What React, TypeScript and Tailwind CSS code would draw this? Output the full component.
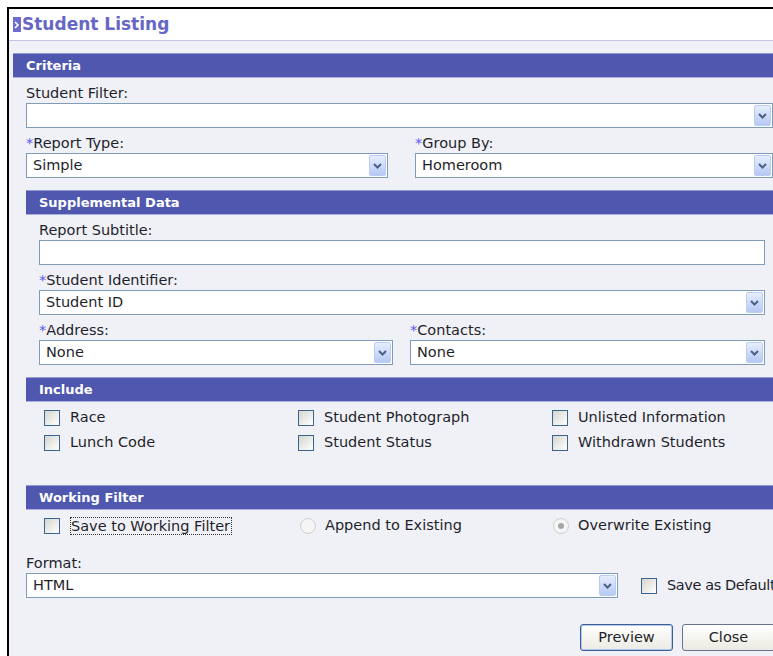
import React from 'react';

type FieldProps = {
  label: string;
  required?: boolean;
  children: React.ReactNode;
};

const SectionBar = ({ title }: { title: string }) => (
  <div className="h-[25px] bg-[#4f58ae] border-t border-b border-t-[#9299d3] border-b-[#aab0e0] flex items-center pl-[13px] text-white font-bold text-[13px]">
    {title}
  </div>
);

const Label = ({ text, required }: { text: string; required?: boolean }) => (
  <div className="h-[18px] leading-[18px] whitespace-nowrap">
    {required && <span className="text-[#5a5af2]">*</span>}
    {text}
  </div>
);

const Field = ({ label, required, children }: FieldProps) => (
  <div>
    <Label text={label} required={required} />
    <div className="mt-[1px]">{children}</div>
  </div>
);

// XP style combo arrow
const DropArrow = () => (
  <div className="w-[17px] shrink-0 self-stretch my-[1px] mr-[1px] rounded-[2px] border border-[#bccdf3] bg-linear-to-b from-[#e6eefe] to-[#b6c9f5] flex items-center justify-center">
    <svg width="9" height="6" viewBox="0 0 9 6">
      <polyline points="1,1 4.5,4.5 8,1" fill="none" stroke="#4d6185" strokeWidth="2" />
    </svg>
  </div>
);

const Select = ({ value, width }: { value: string; width: string }) => (
  <div className={`${width} h-[25px] bg-white border border-[#7f9db9] flex items-center`}>
    <span className="flex-1 pl-[6px] whitespace-nowrap">{value}</span>
    <DropArrow />
  </div>
);

const TextBox = ({ width }: { width: string }) => (
  <div className={`${width} h-[25px] bg-white border border-[#7f9db9]`} />
);

const CheckBox = () => (
  <span className="w-[16px] h-[16px] shrink-0 border border-[#3b6591] bg-linear-to-br from-[#d6d6cf] to-white" />
);

const Radio = ({ checked }: { checked?: boolean }) => (
  <span className="w-[16px] h-[16px] shrink-0 rounded-full border border-[#cfcfcf] bg-[#f5f5f5] flex items-center justify-center">
    {checked && <span className="w-[6px] h-[6px] rounded-full bg-[#a6a6a6]" />}
  </span>
);

const Check = ({ label }: { label: string }) => (
  <div className="h-[25px] flex items-center gap-[10px] whitespace-nowrap">
    <CheckBox />
    <span>{label}</span>
  </div>
);

const Button = ({ label, primary }: { label: string; primary?: boolean }) => (
  <button
    className={`w-[93px] h-[27px] rounded-[3px] border bg-linear-to-b from-white to-[#ebeae2] text-[14.5px] text-[#1f1f2b] ${
      primary ? 'border-[#3d5f96] shadow-[inset_0_0_0_1px_#b4c8ee]' : 'border-[#66738a]'
    }`}
  >
    {label}
  </button>
);

export default function App() {
  return (
    <div className="w-[773px] h-[656px] overflow-hidden bg-white font-['DejaVu_Sans',sans-serif] text-[14.5px] text-[#1f1f2b]">
      <div className="ml-[7px] mt-[7px] w-[820px] h-[700px] border-l-2 border-t-2 border-black bg-[#f0f1f7]">
        {/* Title */}
        <div className="h-[32px] bg-white border-b border-[#c3c5e6] flex items-center pl-[4px]">
          <span className="w-[8px] h-[15px] bg-[#6c6cd0] flex items-center justify-center">
            <svg width="6" height="8" viewBox="0 0 6 8">
              <polyline points="1,1 4,4 1,7" fill="none" stroke="white" strokeWidth="1.6" />
            </svg>
          </span>
          <span className="ml-[1px] text-[17px] font-bold text-[#6666c6] leading-none">Student Listing</span>
        </div>

        <div className="pl-[4px] pt-[12px]">
          <div className="w-[790px]">
            <SectionBar title="Criteria" />
            <div className="pl-[13px] pt-[6px]">
              <Field label="Student Filter:">
                <Select value="" width="w-[747px]" />
              </Field>

              <div className="mt-[6px] flex gap-[27px]">
                <Field label="Report Type:" required>
                  <Select value="Simple" width="w-[362px]" />
                </Field>
                <Field label="Group By:" required>
                  <Select value="Homeroom" width="w-[358px]" />
                </Field>
              </div>

              {/* Supplemental data */}
              <div className="mt-[12px] w-[760px]">
                <SectionBar title="Supplemental Data" />
                <div className="pl-[13px] pt-[6px]">
                  <Field label="Report Subtitle:">
                    <TextBox width="w-[726px]" />
                  </Field>
                  <div className="mt-[6px]">
                    <Field label="Student Identifier:" required>
                      <Select value="Student ID" width="w-[726px]" />
                    </Field>
                  </div>
                  <div className="mt-[6px] flex gap-[17px]">
                    <Field label="Address:" required>
                      <Select value="None" width="w-[354px]" />
                    </Field>
                    <Field label="Contacts:" required>
                      <Select value="None" width="w-[355px]" />
                    </Field>
                  </div>
                </div>
              </div>

              {/* Include */}
              <div className="mt-[12px] w-[760px]">
                <SectionBar title="Include" />
                <div className="pt-[3px] pl-[18px] grid grid-cols-[254px_254px_254px]">
                  <Check label="Race" />
                  <Check label="Student Photograph" />
                  <Check label="Unlisted Information" />
                  <Check label="Lunch Code" />
                  <Check label="Student Status" />
                  <Check label="Withdrawn Students" />
                </div>
              </div>

              {/* Working filter */}
              <div className="mt-[30px] w-[760px]">
                <SectionBar title="Working Filter" />
                <div className="pt-[3px] pl-[18px] grid grid-cols-[254px_254px_254px]">
                  <div className="h-[25px] flex items-center gap-[10px] whitespace-nowrap">
                    <CheckBox />
                    <span className="border border-dotted border-[#333] leading-[16px] pr-[1px]">Save to Working Filter</span>
                  </div>
                  <div className="h-[25px] flex items-center gap-[9px] pl-[2px] whitespace-nowrap">
                    <Radio />
                    <span>Append to Existing</span>
                  </div>
                  <div className="h-[25px] flex items-center gap-[9px] pl-[1px] whitespace-nowrap">
                    <Radio checked />
                    <span>Overwrite Existing</span>
                  </div>
                </div>
              </div>

              {/* Format */}
              <div className="mt-[16px]">
                <Label text="Format:" />
                <div className="mt-[1px] flex items-center">
                  <Select value="HTML" width="w-[592px]" />
                  <span className="ml-[23px] flex items-center gap-[10px] whitespace-nowrap">
                    <CheckBox />
                    <span className="tracking-[-0.4px]">Save as Default</span>
                  </span>
                </div>
              </div>

              <div className="mt-[26px] pl-[554px] flex gap-[9px]">
                <Button label="Preview" primary />
                <Button label="Close" />
              </div>
            </div>
          </div>
        </div>
      </div>
    </div>
  );
}
